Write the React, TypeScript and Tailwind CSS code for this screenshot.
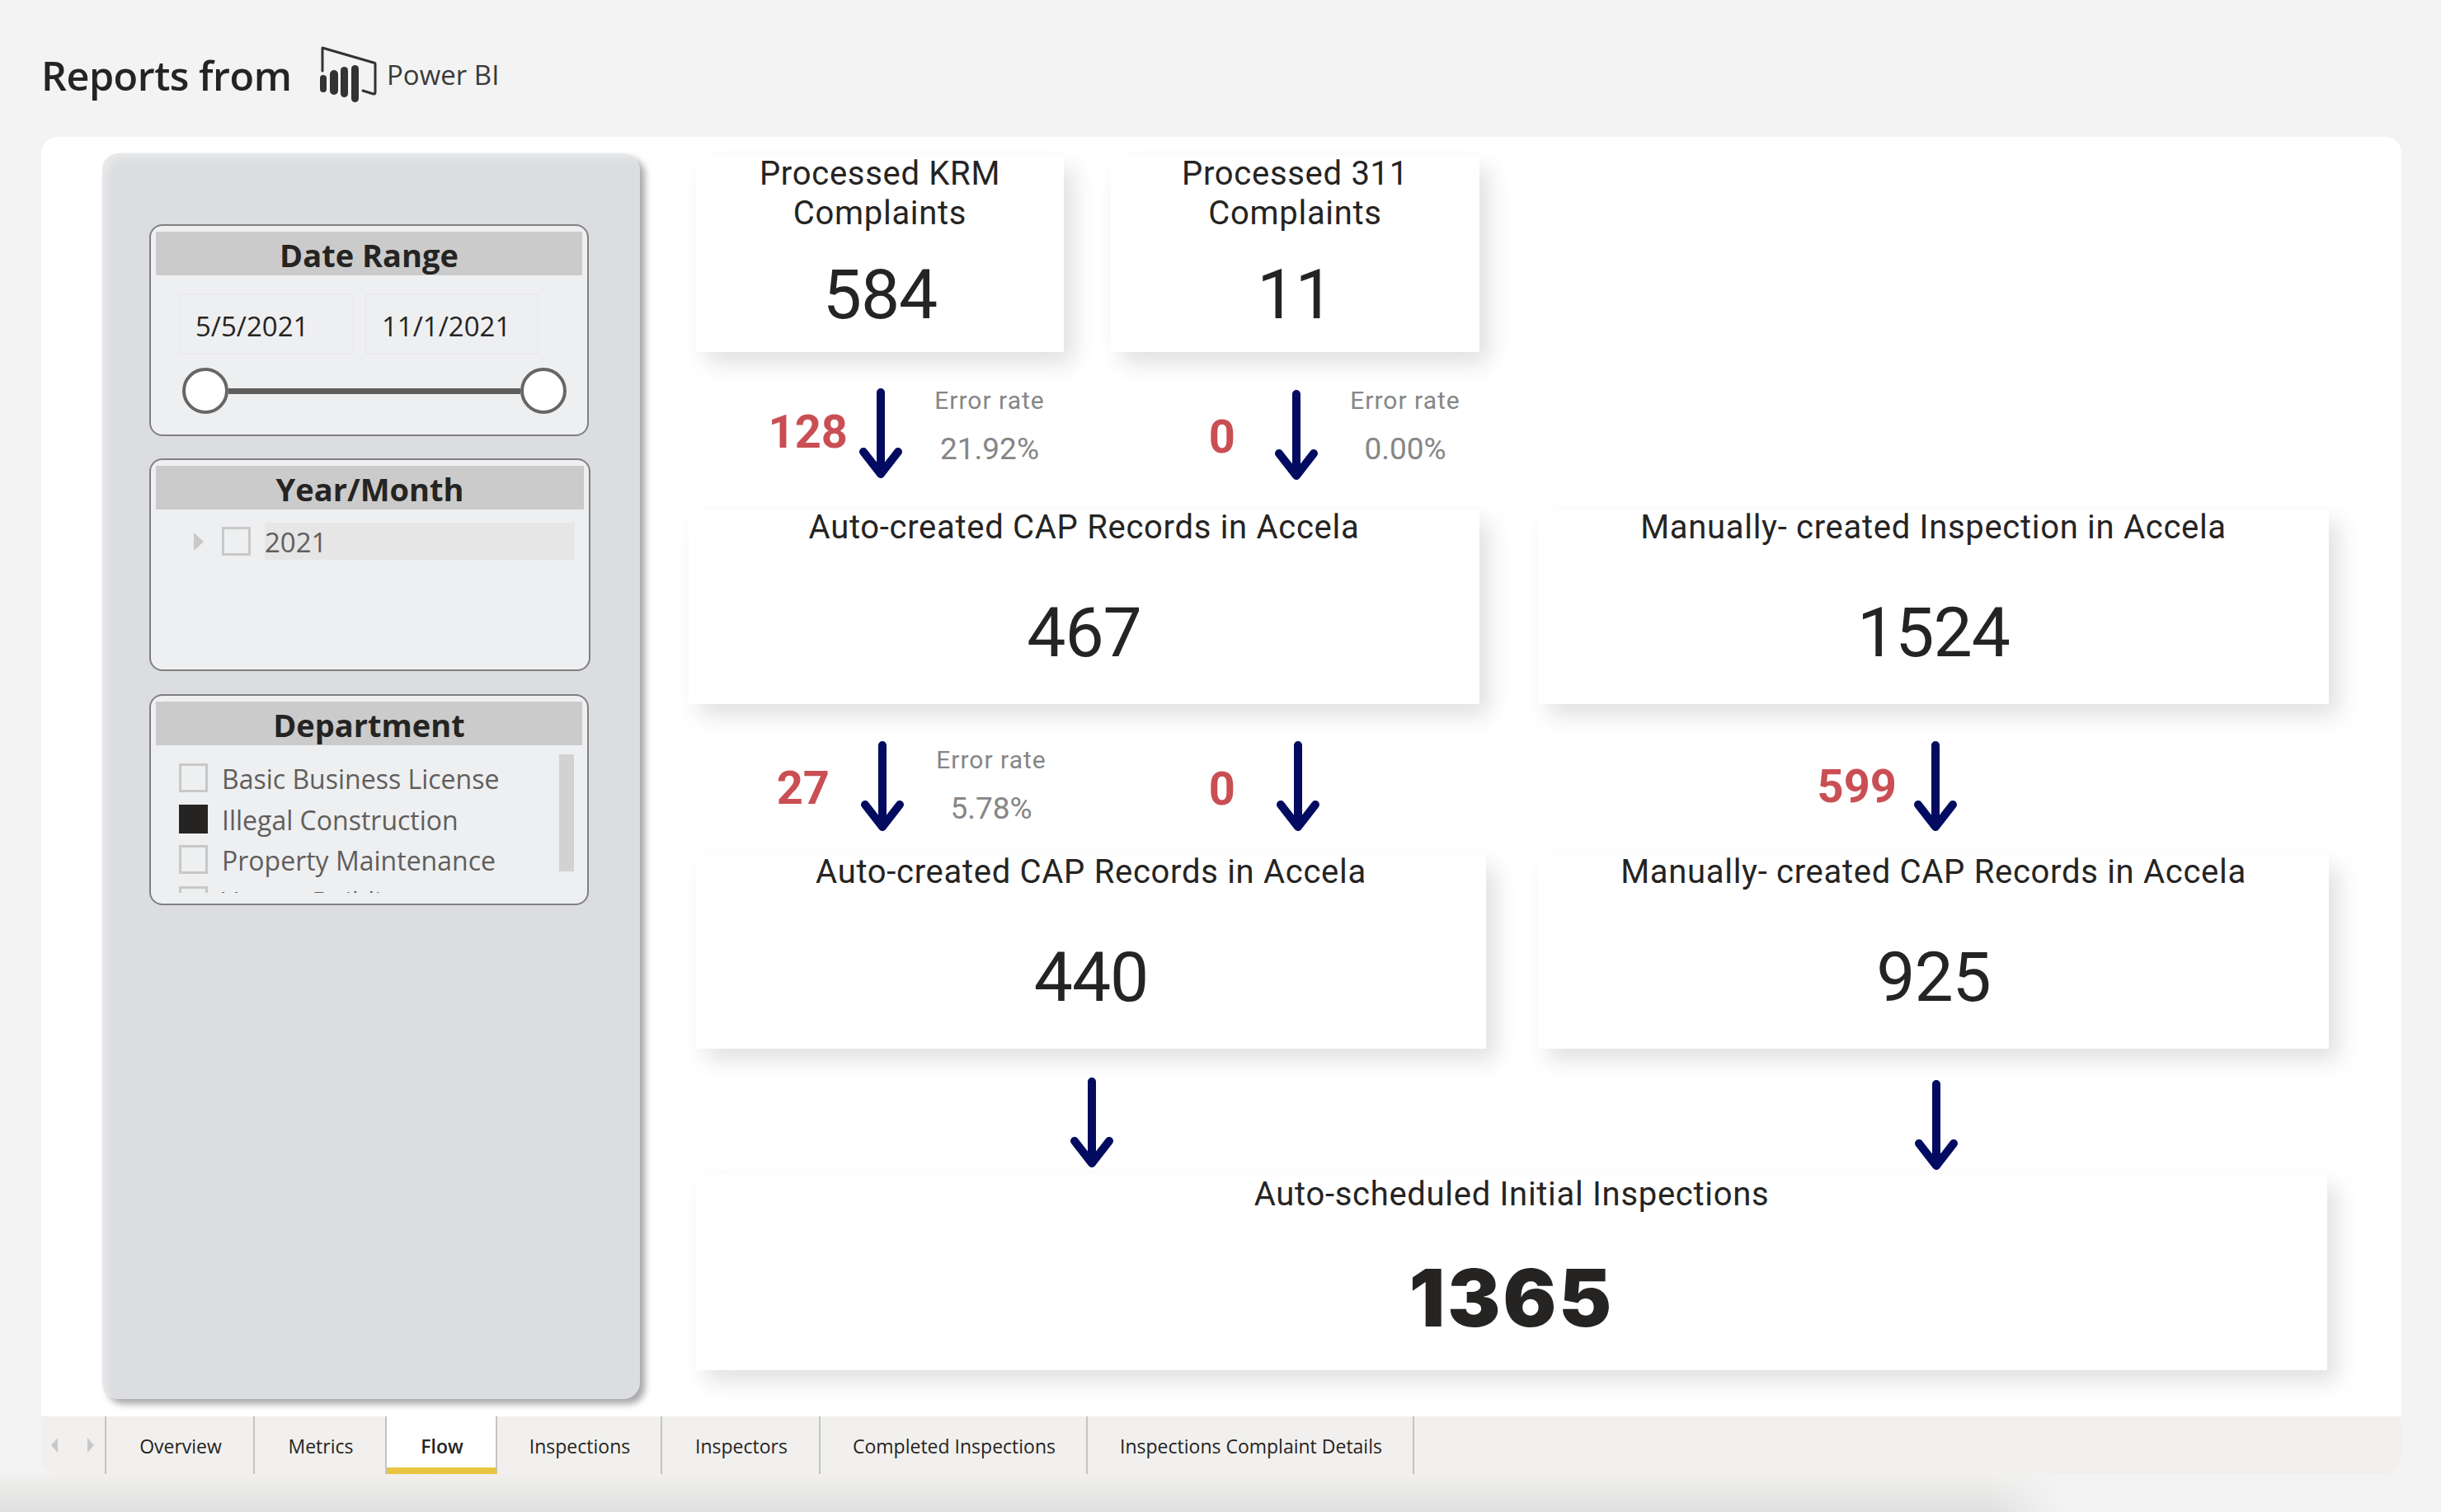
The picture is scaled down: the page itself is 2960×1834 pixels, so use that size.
import React from "react";

const din = "font-['Roboto',sans-serif]";
const segoe = "font-['Open_Sans',sans-serif]";

const tabs = [
  { label: "Overview", width: "w-[180px]" },
  { label: "Metrics", width: "w-[160px]" },
  { label: "Flow", width: "w-[134px]", active: true },
  { label: "Inspections", width: "w-[200px]" },
  { label: "Inspectors", width: "w-[192px]" },
  { label: "Completed Inspections", width: "w-[324px]" },
  { label: "Inspections Complaint Details", width: "w-[396px]" },
];

const departments = [
  { label: "Basic Business License" },
  { label: "Illegal Construction", checked: true },
  { label: "Property Maintenance" },
  { label: "Vacant Building" },
];

const PowerBiLogo = () => (
  <svg width="70" height="70" viewBox="0 0 70 70" fill="none" className="shrink-0">
    <path
      d="M3 30V2L65 20a2 2 0 0 1 2 2V56a2 2 0 0 1-2 2L52 54"
      stroke="#333"
      strokeWidth="3"
      strokeLinejoin="round"
      strokeLinecap="round"
    />
    <rect x="0" y="35" width="8" height="21" rx="4" fill="#333" />
    <rect x="12" y="29" width="10" height="30" rx="5" fill="#333" />
    <rect x="25" y="25" width="9" height="37" rx="4.5" fill="#333" />
    <rect x="38" y="23" width="9" height="45" rx="4.5" fill="#333" />
  </svg>
);

const DownArrow = ({ className = "" }: { className?: string }) => (
  <svg width="54" height="110" viewBox="0 0 54 110" fill="none" className={`shrink-0 ${className}`}>
    <path
      d="M27 5V103M6 77L27 104L48 77"
      stroke="#020b60"
      strokeWidth="10"
      strokeLinecap="round"
      strokeLinejoin="round"
    />
  </svg>
);

const Slicer = ({
  title,
  className,
  children,
}: {
  title: string;
  className: string;
  children: React.ReactNode;
}) => (
  <div className={`rounded-[16px] border-2 border-[#808080] bg-[#eeeff1] overflow-hidden ${className}`}>
    <div className="mt-[7px] mx-[6px] h-[53px] pt-[3px] bg-[#cbcbcb] flex items-center justify-center text-[38px] font-bold text-[#252423]">
      {title}
    </div>
    {children}
  </div>
);

const Checkbox = ({ checked = false }: { checked?: boolean }) => (
  <div
    className={`w-[35px] h-[35px] shrink-0 border-[3px] ${
      checked ? "bg-[#252423] border-[#252423]" : "border-[#c8c8c8]"
    }`}
  />
);

const Card = ({
  title,
  value,
  className,
  valueClass = "mt-[54px]",
}: {
  title: React.ReactNode;
  value: string;
  className: string;
  valueClass?: string;
}) => (
  <div className={`bg-white shadow-[12px_14px_26px_rgba(0,0,0,0.12)] text-center text-[#252423] ${din} ${className}`}>
    <div className="-mt-[3px] text-[40px] leading-[48px] tracking-[0.7px]">{title}</div>
    <div className={`h-[100px] leading-[100px] text-[84px] tracking-[-1px] ${valueClass}`}>{value}</div>
  </div>
);

const ErrorRate = ({ value, className }: { value: string; className: string }) => (
  <div className={`w-[160px] shrink-0 text-center text-[#868686] ${din} ${className}`}>
    <div className="h-[36px] leading-[36px] text-[30px] tracking-[1px]">Error rate</div>
    <div className="mt-[19px] h-[44px] leading-[44px] text-[37px]">{value}</div>
  </div>
);

const Rejected = ({ value, className }: { value: string; className: string }) => (
  <div
    className={`shrink-0 h-[60px] leading-[60px] text-right text-[56px] font-bold text-[#c94f54] ${din} ${className}`}
  >
    {value}
  </div>
);

export default function App() {
  return (
    <div className={`w-[2960px] h-[1834px] bg-[#f3f3f3] overflow-hidden flex flex-col ${segoe}`}>
      {/* Header */}
      <div className="h-[166px] shrink-0 pl-[50px] pt-[56px] flex items-start">
        <span className="w-[338px] shrink-0 text-[48.5px] leading-[70px] font-semibold text-[#252423] tracking-[-0.5px]">
          Reports from
        </span>
        <PowerBiLogo />
        <span className="ml-[11px] text-[33px] leading-[70px] text-[#3a3a3a]">Power BI</span>
      </div>

      {/* Report canvas */}
      <div className="w-[2862px] h-[1552px] shrink-0 ml-[50px] bg-white rounded-t-[20px] flex items-start">
        {/* Filter panel */}
        <div className="ml-[74px] mt-[20px] w-[652px] h-[1511px] shrink-0 pt-[86px] pl-[57px] rounded-[20px] bg-[#dcdde0] shadow-[6px_6px_8px_rgba(0,0,0,0.35),inset_6px_6px_8px_rgba(255,255,255,0.35)]">
          <Slicer title="Date Range" className="w-[533px] h-[257px]">
            <div className="mt-[22px] ml-[34px] flex gap-[14px] text-[33px] text-[#252423]">
              <div className="w-[212px] h-[74px] pl-[18px] pt-[6px] border-2 border-[#eaeaeb] flex items-center">5/5/2021</div>
              <div className="w-[210px] h-[74px] pl-[18px] pt-[6px] border-2 border-[#eaeaeb] flex items-center">11/1/2021</div>
            </div>
            <div className="mt-[16px] ml-[38px] w-[466px] flex items-center">
              <div className="w-[56px] h-[56px] rounded-full bg-white border-[4px] border-[#666666]" />
              <div className="flex-1 h-[7px] bg-[#605e5c]" />
              <div className="w-[56px] h-[56px] rounded-full bg-white border-[4px] border-[#666666]" />
            </div>
          </Slicer>

          <Slicer title="Year/Month" className="mt-[27px] w-[535px] h-[258px]">
            <div className="mt-[16px] ml-[52px] flex items-center">
              <div className="w-0 h-0 border-y-[11px] border-y-transparent border-l-[12px] border-l-[#c8c8c8]" />
              <div className="ml-[22px]">
                <Checkbox />
              </div>
              <div className="ml-[17px] w-[376px] h-[45px] pt-[1px] bg-[#e6e6e6] text-[33px] leading-[45px] text-[#605e5c]">
                2021
              </div>
            </div>
          </Slicer>

          <Slicer title="Department" className="mt-[28px] w-[533px] h-[256px]">
            <div className="flex items-start">
              <div className="flex-1 h-[179px] overflow-hidden pt-[22px] pl-[34px]">
                {departments.map((d) => (
                  <div key={d.label} className="h-[35px] mb-[14.5px] flex items-center">
                    <Checkbox checked={d.checked} />
                    <span className="ml-[17px] pt-[2px] text-[32px] leading-[35px] whitespace-nowrap text-[#605e5c]">
                      {d.label}
                    </span>
                  </div>
                ))}
              </div>
              <div className="mt-[11px] mr-[16px] w-[18px] h-[142px] bg-[#d2d2d0]" />
            </div>
          </Slicer>
        </div>

        {/* Flow diagram */}
        <div className="ml-[59px] mt-[24px] w-[1989px] shrink-0">
          <div className="h-[237px] flex gap-[57px] pl-[9px]">
            <Card
              className="w-[446px] h-[237px]"
              valueClass="mt-[25px]"
              title={<>Processed KRM<br />Complaints</>}
              value="584"
            />
            <Card
              className="w-[447px] h-[237px]"
              valueClass="mt-[25px]"
              title={<>Processed 311<br />Complaints</>}
              value="11"
            />
          </div>

          <div className="h-[192px] flex items-start">
            <Rejected value="128" className="w-[193px] mt-[67px]" />
            <DownArrow className="ml-[13px] mt-[44px]" />
            <ErrorRate value="21.92%" className="ml-[25px] mt-[41px]" />
            <Rejected value="0" className="w-[218px] mt-[73px]" />
            <DownArrow className="ml-[47px] mt-[46px]" />
            <ErrorRate value="0.00%" className="ml-[25px] mt-[41px]" />
          </div>

          <div className="h-[235px] flex gap-[71px]">
            <Card className="w-[959px] h-[235px]" title="Auto-created CAP Records in Accela" value="467" />
            <Card className="w-[959px] h-[235px]" title="Manually- created Inspection in Accela" value="1524" />
          </div>

          <div className="h-[183px] flex items-start">
            <Rejected value="27" className="w-[171px] mt-[72px]" />
            <DownArrow className="ml-[37px] mt-[45px]" />
            <ErrorRate value="5.78%" className="ml-[25px] mt-[50px]" />
            <Rejected value="0" className="w-[216px] mt-[73px]" />
            <DownArrow className="ml-[49px] mt-[45px]" />
            <Rejected value="599" className="w-[699px] mt-[70px]" />
            <DownArrow className="ml-[20px] mt-[45px]" />
          </div>

          <div className="h-[235px] flex gap-[63px] pl-[9px]">
            <Card className="w-[958px] h-[235px]" title="Auto-created CAP Records in Accela" value="440" />
            <Card className="w-[959px] h-[235px]" title="Manually- created CAP Records in Accela" value="925" />
          </div>

          <div className="h-[156px] flex items-start">
            <DownArrow className="ml-[462px] mt-[35px]" />
            <DownArrow className="ml-[970px] mt-[38px]" />
          </div>

          <div className="pl-[9px]">
            <div className={`w-[1978px] h-[237px] bg-white shadow-[12px_14px_26px_rgba(0,0,0,0.12)] text-center text-[#252423] ${din}`}>
              <div className="-mt-[3px] text-[40px] leading-[48px] tracking-[0.7px]">Auto-scheduled Initial Inspections</div>
              <div className="mt-[46px] h-[110px] leading-[110px] text-[96px] tracking-[3px] font-black font-['Inter',sans-serif]">1365</div>
            </div>
          </div>
        </div>
      </div>

      {/* Page tabs */}
      <div className="w-[2862px] h-[70px] shrink-0 ml-[50px] bg-[#f1f0ee] rounded-b-[20px] flex">
        <div className="w-[79px] h-full shrink-0 flex items-center pl-[12px] gap-[36px] border-r-2 border-[#c4c4c4]">
          <div className="w-0 h-0 border-y-[9px] border-y-transparent border-r-[8px] border-r-[#c8c8c8]" />
          <div className="w-0 h-0 border-y-[9px] border-y-transparent border-l-[8px] border-l-[#c8c8c8]" />
        </div>
        {tabs.map((t) => (
          <div
            key={t.label}
            className={`${t.width} h-full shrink-0 pl-[2px] flex items-center justify-center border-r-2 border-[#c4c4c4] text-[23px] text-[#252423] ${
              t.active ? "bg-white font-semibold border-b-[8px] border-b-[#e8c441] pt-[10px]" : "pt-[2px]"
            }`}
          >
            {t.label}
          </div>
        ))}
      </div>

      {/* Fade under the report */}
      <div className="flex-1 w-[2500px] bg-gradient-to-b from-[#f1f0ee] to-[#e0e0e0] flex justify-end">
        <div className="w-[90px] h-full bg-gradient-to-r from-transparent to-[#f3f3f3]" />
      </div>
    </div>
  );
}
